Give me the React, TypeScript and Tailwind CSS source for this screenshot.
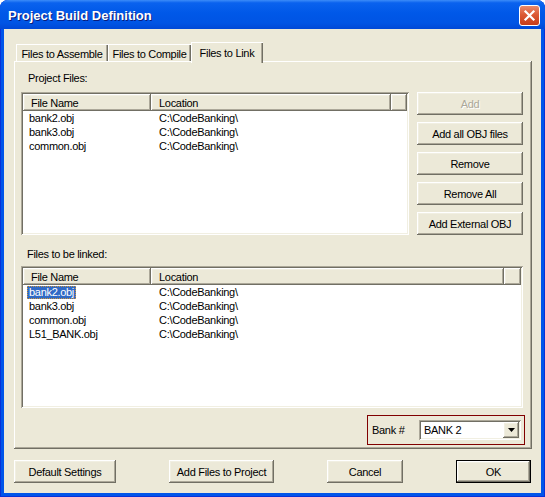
import React from 'react';

const raised =
  'shadow-[inset_-1px_-1px_0_#716F64,inset_1px_1px_0_#FFFFFF,inset_-2px_-2px_0_#ACA899,inset_2px_2px_0_#F1EFE2]';
const sunken =
  'shadow-[inset_1px_1px_0_#ACA899,inset_-1px_-1px_0_#FFFFFF,inset_2px_2px_0_#716F64,inset_-2px_-2px_0_#F1EFE2]';
const tabEdge =
  'shadow-[inset_1px_0_0_#FFFFFF,inset_0_1px_0_#FFFFFF,inset_-1px_0_0_#716F64,inset_-2px_0_0_#ACA899]';

type Col = { label: string; w: string };

const projectCols: Col[] = [
  { label: 'File Name', w: 'w-[128px]' },
  { label: 'Location', w: 'w-[240px]' },
  { label: '', w: 'w-[16px]' },
];

const linkCols: Col[] = [
  { label: 'File Name', w: 'w-[128px]' },
  { label: 'Location', w: 'w-[353px]' },
  { label: '', w: 'w-[17px]' },
];

const projectFiles = [
  ['bank2.obj', 'C:\\CodeBanking\\'],
  ['bank3.obj', 'C:\\CodeBanking\\'],
  ['common.obj', 'C:\\CodeBanking\\'],
];

const linkFiles = [
  ['bank2.obj', 'C:\\CodeBanking\\'],
  ['bank3.obj', 'C:\\CodeBanking\\'],
  ['common.obj', 'C:\\CodeBanking\\'],
  ['L51_BANK.obj', 'C:\\CodeBanking\\'],
];

interface ListViewProps {
  cols: Col[];
  rows: string[][];
  selected?: number;
  className?: string;
}

const ListView: React.FC<ListViewProps> = ({ cols, rows, selected, className = '' }) => {
  return (
    <div className={`bg-white p-[2px] ${sunken} ${className}`}>
      <div className="flex h-[17px]">
        {cols.map((c, i) => (
          <div key={i} className={`${c.w} shrink-0 bg-[#ECE9D8] pl-[8px] leading-[18px] ${raised}`}>
            {c.label}
          </div>
        ))}
      </div>
      {rows.map((r, i) => (
        <div key={i} className="flex h-[14px] leading-[15px]">
          <div className="w-[128px] shrink-0 pl-[4px]">
            {i === selected ? (
              <span className="inline-block h-[13px] mt-[1px] px-[2px] leading-[13px] bg-[#316AC5] text-white outline outline-1 outline-dotted outline-[#CE953A] -outline-offset-1">
                {r[0]}
              </span>
            ) : (
              <span className="px-[2px]">{r[0]}</span>
            )}
          </div>
          <div className="pl-[8px]">{r[1]}</div>
        </div>
      ))}
    </div>
  );
};

interface BtnProps {
  children: React.ReactNode;
  className?: string;
  disabled?: boolean;
  isDefault?: boolean;
}

const Btn: React.FC<BtnProps> = ({ children, className = '', disabled, isDefault }) => {
  return (
    <div
      className={`h-[23px] pt-[1px] flex items-center justify-center bg-[#ECE9D8] ${raised} ${
        isDefault ? 'border border-black' : ''
      } ${disabled ? 'text-[#ACA899] [text-shadow:1px_1px_0_#FFFFFF]' : 'text-black'} ${className}`}
    >
      {children}
    </div>
  );
};

export default function App() {
  return (
    <div className="w-[545px] h-[497px] flex flex-col rounded-t-[8px] bg-[#0055EA] shadow-[inset_0_0_0_1px_#0831D9] font-['Liberation_Sans',Arial,sans-serif] text-[11px] tracking-[-0.3px] text-black select-none">
      {/* title bar */}
      <div className="h-[29px] shrink-0 flex items-center justify-between pl-[8px] pr-[5px] rounded-t-[8px] bg-[linear-gradient(to_bottom,#3C8CF8_0%,#0A62EE_10%,#0058E8_45%,#0054E4_80%,#0048D6_100%)]">
        <span className="pt-[3px] text-white font-bold text-[13px] tracking-normal [text-shadow:1px_1px_0_#0A1B7A]">
          Project Build Definition
        </span>
        <div className="w-[21px] h-[21px] mt-[2px] rounded-[3px] border border-white bg-[linear-gradient(to_bottom,#E98A6C_0%,#DC5A35_45%,#C83C18_100%)] flex items-center justify-center">
          <svg width="13" height="13" viewBox="0 0 13 13">
            <path d="M2.5 2.5 L10.5 10.5 M10.5 2.5 L2.5 10.5" stroke="#FFFFFF" strokeWidth="2.2" strokeLinecap="square" />
          </svg>
        </div>
      </div>

      {/* client area */}
      <div className="flex-1 mx-[4px] mb-[4px] bg-[#ECE9D8] pt-[13px] pl-[10px] pr-[9px] flex flex-col">
        {/* tabs */}
        <div className="flex items-end h-[19px] pl-[2px]">
          <div className={`w-[92px] h-[17px] flex items-center justify-center pt-[3px] ${tabEdge}`}>
            Files to Assemble
          </div>
          <div className={`w-[83px] h-[17px] flex items-center justify-center pt-[3px] ${tabEdge}`}>
            Files to Compile
          </div>
          <div className={`relative z-10 w-[72px] h-[21px] -mb-[2px] bg-[#ECE9D8] flex items-start justify-center pt-[3px] ${tabEdge}`}>
            Files to Link
          </div>
        </div>

        {/* tab panel */}
        <div className="h-[388px] pt-[10px] pl-[7px] pr-[9px] pb-[4px] flex flex-col shadow-[inset_-1px_-1px_0_#716F64,inset_1px_1px_0_#FFFFFF,inset_-2px_-2px_0_#ACA899]">
          <div className="h-[13px] leading-[15px] pl-[7px]">Project Files:</div>
          <div className="mt-[8px] flex gap-[8px] h-[143px]">
            <ListView cols={projectCols} rows={projectFiles} className="w-[388px] h-[143px]" />
            <div className="w-[106px] flex flex-col gap-[7px]">
              <Btn disabled>Add</Btn>
              <Btn>Add all OBJ files</Btn>
              <Btn>Remove</Btn>
              <Btn>Remove All</Btn>
              <Btn>Add External OBJ</Btn>
            </div>
          </div>
          <div className="mt-[12px] h-[13px] leading-[15px] pl-[6px]">Files to be linked:</div>
          <ListView cols={linkCols} rows={linkFiles} selected={0} className="mt-[6px] w-[502px] h-[142px]" />
          <div className="mt-[7px] flex justify-end -mr-[2px]">
            <div className="w-[158px] h-[30px] border border-[#800000] flex items-center pl-[4px] pr-[3px] justify-between">
              <span className="pt-[1px]">Bank #</span>
              <div className={`w-[102px] h-[20px] bg-white p-[2px] flex items-center ${sunken}`}>
                <span className="flex-1 pl-[3px] pt-[1px]">BANK 2</span>
                <div className={`w-[16px] h-[16px] bg-[#ECE9D8] flex items-center justify-center ${raised}`}>
                  <svg width="7" height="4" viewBox="0 0 7 4">
                    <path d="M0 0 H7 L3.5 4 Z" fill="#000000" />
                  </svg>
                </div>
              </div>
            </div>
          </div>
        </div>

        {/* bottom buttons */}
        <div className="mt-[11px] flex justify-between pr-[1px]">
          <Btn className="w-[102px]">Default Settings</Btn>
          <Btn className="w-[105px]">Add Files to Project</Btn>
          <Btn className="w-[76px]">Cancel</Btn>
          <Btn className="w-[75px]" isDefault>
            OK
          </Btn>
        </div>
      </div>
    </div>
  );
}
